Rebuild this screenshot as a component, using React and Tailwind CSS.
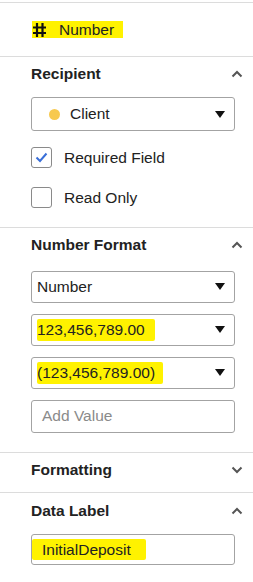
import React from "react";

const font = { fontFamily: '"Liberation Sans", Arial, sans-serif' };

function Chevron({ up = true }) {
  return (
    <svg width="12" height="8" viewBox="0 0 12 8" className="text-[#555]">
      <path
        d={up ? "M1.5 6.5 L6 2 L10.5 6.5" : "M1.5 1.5 L6 6 L10.5 1.5"}
        fill="none"
        stroke="currentColor"
        strokeWidth="2"
      />
    </svg>
  );
}

function Caret() {
  return (
    <svg width="10" height="7" viewBox="0 0 10 7">
      <path d="M0 0 H10 L5 7 Z" fill="#111" />
    </svg>
  );
}

function SectionTitle({ title, up = true }) {
  return (
    <div className="flex h-[20px] items-center justify-between pl-[31px] pr-[10px]">
      <span className="text-[15.5px] font-bold text-[#222]">{title}</span>
      <Chevron up={up} />
    </div>
  );
}

function Select({ children, h = "h-[32px]" }) {
  return (
    <div
      className={`flex ${h} w-[204px] items-center justify-between rounded-[3px] border border-[#a3a3a3] pl-[5px] pr-[9px]`}
    >
      <div className="flex items-center text-[15.5px] text-[#222]">{children}</div>
      <Caret />
    </div>
  );
}

function Check({ checked, label }) {
  return (
    <div className="flex items-center gap-[12px]">
      <div className="flex h-[21px] w-[21px] items-center justify-center rounded-[3px] border border-[#8a8a8a]">
        {checked && (
          <svg width="13" height="11" viewBox="0 0 13 11">
            <path d="M1.5 5.5 L5 9 L11.5 1.5" fill="none" stroke="#3a6fd8" strokeWidth="2" />
          </svg>
        )}
      </div>
      <span className="text-[15.5px] text-[#222]">{label}</span>
    </div>
  );
}

export default function App() {
  return (
    <div className="w-[253px] h-[582px] overflow-hidden bg-white" style={font}>
      <div className="h-[2px]" />
      <div className="flex h-[54px] items-center border-t border-[#dcdcdc] pl-[32px]">
        <span className="flex h-[17px] items-center gap-[12px] bg-[#fff200] pr-[9px]">
          <svg width="15" height="16" viewBox="0 0 15 16">
            <path d="M5 1 V15 M10.5 1 V15 M1 5.5 H14 M1 11 H14" stroke="#111" strokeWidth="2.2" fill="none" />
          </svg>
          <span className="text-[15.5px] text-[#222]">Number</span>
        </span>
      </div>

      <div className="border-t border-[#dcdcdc] pt-[7px] pb-[17px]">
        <SectionTitle title="Recipient" />
        <div className="mt-[13px] flex flex-col pl-[31px]">
          <Select h="h-[34px]">
            <span className="ml-[12px] mr-[10px] h-[11px] w-[11px] rounded-full bg-[#f7c94f]" />
            Client
          </Select>
          <div className="mt-[15px] flex flex-col gap-[17px]">
            <Check checked label="Required Field" />
            <Check label="Read Only" />
          </div>
        </div>
      </div>

      <div className="border-t border-[#dcdcdc] pt-[7px] pb-[19px]">
        <SectionTitle title="Number Format" />
        <div className="mt-[16px] flex flex-col gap-[11px] pl-[31px]">
          <Select>Number</Select>
          <Select>
            <span className="rounded-[2px] bg-[#fff200] pr-[10px] leading-[22px]">123,456,789.00</span>
          </Select>
          <Select>
            <span className="rounded-[2px] bg-[#fff200] pr-[8px] leading-[22px]">(123,456,789.00)</span>
          </Select>
          <div className="flex h-[33px] w-[204px] items-center rounded-[3px] border border-[#a3a3a3] pl-[10px] text-[15.5px] text-[#8a8a8a]">
            Add Value
          </div>
        </div>
      </div>

      <div className="border-t border-[#dcdcdc] pt-[7px] pb-[12px]">
        <SectionTitle title="Formatting" up={false} />
      </div>

      <div className="border-t border-[#dcdcdc] pt-[8px]">
        <SectionTitle title="Data Label" />
        <div className="mt-[13px] pl-[31px]">
          <div className="flex h-[31px] w-[204px] items-center rounded-[3px] border border-[#a3a3a3]">
            <span className="rounded-[2px] bg-[#fff200] pl-[10px] pr-[15px] text-[15.5px] leading-[21px] text-[#222]">
              InitialDeposit
            </span>
          </div>
        </div>
      </div>
    </div>
  );
}
